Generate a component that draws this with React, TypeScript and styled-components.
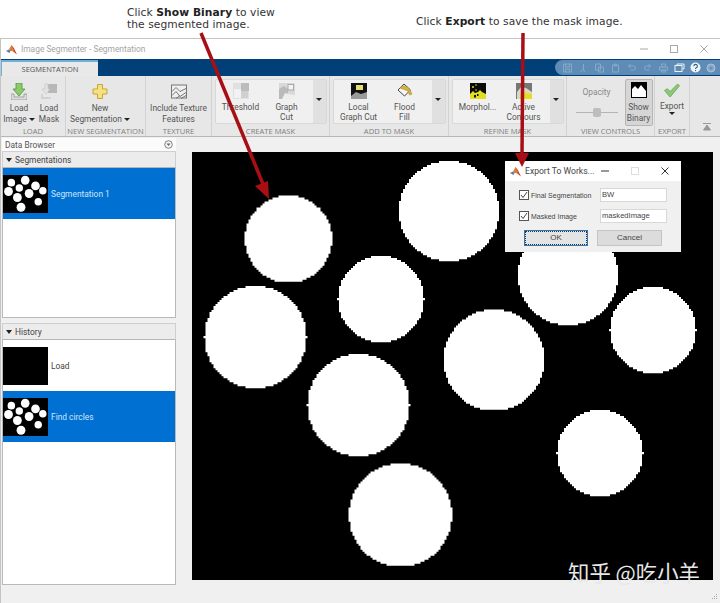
import React from "react";
import styled, { createGlobalStyle } from "styled-components";

const GlobalStyle = createGlobalStyle`
  html, body { margin: 0; padding: 0; background: #fff; }
`;

const uiFont = `Roboto, "Liberation Sans", sans-serif`;

const Page = styled.div`
  position: relative;
  width: 720px;
  height: 603px;
  overflow: hidden;
  background: #fff;
  font-family: "Open Sans", "Liberation Sans", sans-serif;
`;

const Captions = styled.div`
  height: 38px;
  display: flex;
  align-items: flex-start;
`;

const Caption = styled.div<{ $left: number; $top: number; $width: number }>`
  margin-left: ${(p) => p.$left}px;
  padding-top: ${(p) => p.$top}px;
  width: ${(p) => p.$width}px;
  font-family: "DejaVu Sans", sans-serif;
  font-size: 10.7px;
  line-height: 12px;
  letter-spacing: 0.07px;
  color: #333;
  white-space: pre;
  b { color: #222; }
`;

const Window = styled.div`
  height: 565px;
  box-sizing: border-box;
  border-top: 1px solid #c4c4c4;
  border-left: 1px solid #c4c4c4;
  display: flex;
  flex-direction: column;
`;

const TitleBar = styled.div`
  height: 20px;
  display: flex;
  align-items: center;
  padding-left: 5px;
  background: #fff;
`;

const TitleText = styled.span`
  margin-left: 4px;
  font-family: ${uiFont};
  font-size: 8.4px;
  color: #a4a4a4;
  flex: 1;
`;

const WinButtons = styled.div`
  display: flex;
  align-items: center;
  gap: 20px;
  padding-right: 11px;
`;

const TabBar = styled.div`
  height: 17px;
  background: #003f78;
  display: flex;
  justify-content: space-between;
  align-items: flex-end;
`;

const Tab = styled.div`
  width: 97px;
  height: 16px;
  box-sizing: border-box;
  background: #e9e9e9;
  border-top: 2px solid #6fb0d8;
  border-left: 1px solid #6fb0d8;
  text-align: center;
  font-size: 7.5px;
  line-height: 14px;
  color: #555;
`;

const QuickBar = styled.div`
  height: 15px;
  width: 165px;
  margin-bottom: 1px;
  border-radius: 8px 0 0 8px;
  background: #5e8cb6;
  display: flex;
  align-items: center;
  justify-content: flex-end;
  gap: 5px;
  padding-right: 4px;
  box-sizing: border-box;
`;

const Ribbon = styled.div`
  height: 61px;
  box-sizing: border-box;
  background: #e7e7e7;
  border-bottom: 1px solid #b8b8b8;
  display: flex;
`;

const Group = styled.div<{ $width: number }>`
  width: ${(p) => p.$width}px;
  box-sizing: border-box;
  border-right: 1px solid #d2d2d2;
  display: flex;
  flex-direction: column;
`;

const GroupTools = styled.div<{ $padLeft?: number; $padRight?: number }>`
  flex: 1;
  display: flex;
  justify-content: center;
  padding: 3px ${(p) => p.$padRight ?? 0}px 0 ${(p) => p.$padLeft ?? 0}px;
  min-height: 0;
`;

const GroupLabel = styled.div`
  height: 10px;
  text-align: center;
  font-size: 7.6px;
  line-height: 10px;
  color: #808080;
  white-space: nowrap;
`;

const Tool = styled.div<{ $width: number; $muted?: boolean }>`
  width: ${(p) => p.$width}px;
  display: flex;
  flex-direction: column;
  align-items: center;
  padding-top: 4px;
  font-family: ${uiFont};
  font-size: 8.4px;
  line-height: 10.5px;
  color: ${(p) => (p.$muted ? "#8a8a8a" : "#555")};
  text-align: center;
  white-space: nowrap;
  svg { margin-bottom: 3px; }
`;

const GalleryTool = styled(Tool)`
  padding-top: 3px;
  line-height: 10px;
  svg { margin-bottom: 3px; }
`;

const ToggledTool = styled(Tool)`
  box-sizing: border-box;
  height: 47px;
  border: 1px solid #b5b5b5;
  border-radius: 2px;
  background: #d6d6d6;
  padding-top: 2px;
  svg { margin-bottom: 4px; }
`;

const OpacityTool = styled(Tool)`
  padding-top: 8px;
`;

const Gallery = styled.div<{ $width: number }>`
  width: ${(p) => p.$width}px;
  height: 45px;
  box-sizing: border-box;
  border: 1px solid #d8d8d8;
  border-radius: 2px;
  background: #f0f0f0;
  display: flex;
`;

const GalleryItems = styled.div`
  flex: 1;
  display: flex;
  padding-left: 2px;
`;

const GalleryMore = styled.div`
  width: 13px;
  background: #e0e0e0;
  display: flex;
  align-items: center;
  justify-content: center;
  padding-bottom: 4px;
`;

const Caret = styled.span`
  display: inline-block;
  width: 0;
  height: 0;
  border-left: 3px solid transparent;
  border-right: 3px solid transparent;
  border-top: 3px solid #222;
  vertical-align: 1px;
`;

const SliderTrack = styled.div`
  position: relative;
  width: 42px;
  height: 1px;
  margin-top: 14px;
  background: #b4b4b4;
`;

const SliderThumb = styled.span`
  position: absolute;
  left: 17px;
  top: -4px;
  width: 8px;
  height: 9px;
  border-radius: 2px;
  background: #bdbdbd;
`;

const CollapseArea = styled.div`
  flex: 1;
  display: flex;
  align-items: flex-end;
  justify-content: flex-end;
  padding: 0 9px 5px 0;
`;

const Content = styled.div`
  flex: 1;
  min-height: 0;
  background: #f0f0f0;
  display: flex;
  position: relative;
`;

const Sidebar = styled.div`
  width: 174px;
  margin-left: 1px;
  display: flex;
  flex-direction: column;
`;

const BrowserHead = styled.div`
  height: 13px;
  margin-top: 1px;
  padding: 0 3px;
  background: #fbfbfb;
  display: flex;
  align-items: center;
  justify-content: space-between;
  font-family: ${uiFont};
  font-size: 8.4px;
  color: #555;
`;

const SectionHead = styled.div<{ $gap: number }>`
  height: 17px;
  box-sizing: border-box;
  margin-top: ${(p) => p.$gap}px;
  padding-left: 3px;
  display: flex;
  align-items: center;
  gap: 3px;
  background: #ececec;
  border: 1px solid #cfcfcf;
  border-bottom: 1px solid #b5b5b5;
  font-family: ${uiFont};
  font-size: 8.4px;
  color: #444;
`;

const TriangleDown = styled.span`
  width: 0;
  height: 0;
  border-left: 3.5px solid transparent;
  border-right: 3.5px solid transparent;
  border-top: 4px solid #222;
`;

const List = styled.div<{ $height: number }>`
  height: ${(p) => p.$height}px;
  box-sizing: border-box;
  background: #fff;
  border: 1px solid #b9b9b9;
  border-top: none;
`;

const Row = styled.div<{ $selected?: boolean }>`
  height: 51px;
  display: flex;
  align-items: center;
  gap: 3px;
  background: ${(p) => (p.$selected ? "#0070d2" : "#fff")};
  color: ${(p) => (p.$selected ? "#cde6fa" : "#444")};
  font-family: ${uiFont};
  font-size: 8.4px;
`;

const Thumb = styled.svg`
  width: 45px;
  height: 38px;
  display: block;
  flex: none;
`;

const CanvasArea = styled.div`
  flex: 1;
  padding: 15px 0 0 16px;
`;

const Picture = styled.svg`
  display: block;
  width: 521px;
  height: 428px;
`;

const Dialog = styled.div`
  position: absolute;
  left: 505px;
  top: 161px;
  width: 176px;
  height: 91px;
  background: #f0f0f0;
  font-family: "Liberation Sans", sans-serif;
  font-size: 7.6px;
  color: #444;
`;

const DialogTitle = styled.div`
  height: 20px;
  background: #fff;
  display: flex;
  align-items: center;
  padding-left: 5px;
  font-family: ${uiFont};
  font-size: 8.6px;
  gap: 4px;
  white-space: nowrap;
  span { flex: 1; }
`;

const DialogBody = styled.div`
  padding: 7px 14px 0 14px;
  display: flex;
  flex-direction: column;
  gap: 7px;
`;

const DialogRow = styled.div`
  display: flex;
  align-items: center;
  justify-content: space-between;
`;

const CheckLabel = styled.label`
  display: flex;
  align-items: center;
  gap: 2px;
  font-size: 7px;
`;

const Check = styled.span`
  width: 8px;
  height: 8px;
  border: 1px solid #555;
  background: #fff;
  display: flex;
`;

const Field = styled.div`
  width: 67px;
  height: 14px;
  box-sizing: border-box;
  padding-left: 1px;
  background: #fff;
  border: 1px solid #d8d8d8;
  line-height: 12px;
`;

const DialogButtons = styled.div`
  display: flex;
  justify-content: space-between;
  padding: 0 5px;
`;

const DialogButton = styled.div<{ $primary?: boolean }>`
  width: ${(p) => (p.$primary ? 64 : 65)}px;
  height: 16px;
  box-sizing: border-box;
  text-align: center;
  font-size: 8px;
  line-height: 14px;
  background: ${(p) => (p.$primary ? "#e4e4e4" : "#dcdcdc")};
  border: 1px ${(p) => (p.$primary ? "solid #2f78b8" : "solid #c4c4c4")};
  outline: ${(p) => (p.$primary ? "1px dotted #333" : "none")};
  outline-offset: -2px;
`;

const Watermark = styled.div`
  position: absolute;
  left: 568px;
  top: 559px;
  font-family: "Noto Sans CJK SC", sans-serif;
  font-size: 21.4px;
  line-height: 26px;
  color: #e8e8e8;
  white-space: nowrap;
`;

const Arrows = styled.svg`
  position: absolute;
  left: 0;
  top: 0;
  width: 720px;
  height: 603px;
  pointer-events: none;
`;

const Grip = styled.svg`
  position: absolute;
  right: 2px;
  bottom: 2px;
`;

const circles = [
  [288.5, 239, 43.5],
  [449, 211, 50],
  [381, 299, 43],
  [255.5, 337, 51],
  [494, 360, 50.5],
  [568, 275, 50],
  [653, 330, 43],
  [358.5, 405, 51],
  [600, 453, 43],
  [400.5, 515, 51.5],
];

// the source image is low res, so the edges show as small steps
const STEP = 2;

function stepped(cx: number, cy: number, r: number) {
  let d = "";
  for (let y = cy - r; y < cy + r; y += STEP) {
    const mid = y + STEP / 2 - cy;
    if (Math.abs(mid) >= r) continue;
    const half = Math.round(Math.sqrt(r * r - mid * mid) / STEP) * STEP;
    d += `M${(cx - half).toFixed(1)} ${y.toFixed(1)}h${(half * 2).toFixed(1)}v${STEP + 0.2}h${(-half * 2).toFixed(1)}z`;
  }
  return d;
}

const SteppedCircles = () => (
  <>
    {circles.map(([cx, cy, r]) => (
      <path key={cx} d={stepped(cx, cy, r)} fill="#fff" />
    ))}
  </>
);

const MaskThumb = ({ empty }: { empty?: boolean }) => (
  <Thumb viewBox="192 152 521 428" preserveAspectRatio="none">
    <rect x="192" y="152" width="521" height="428" fill="#000" />
    {!empty && circles.map(([cx, cy, r]) => <circle key={cx} cx={cx} cy={cy} r={r} fill="#fff" />)}
  </Thumb>
);

const MatlabLogo = () => (
  <svg width="11" height="11" viewBox="0 0 11 11">
    <path d="M0 7l3-1.5L4.5 7 3.5 9z" fill="#4a7fb5" />
    <path d="M3 5.5L5.5 1 8 4.5 6 7H4.5z" fill="#e07a35" />
    <path d="M5.5 1l1.5 3 1.5 4.5L11 10.5 8 4.5z" fill="#b8341c" />
    <path d="M6 7l2-2.5.5 4z" fill="#d9622b" />
  </svg>
);

const LoadImageIcon = () => (
  <svg width="16" height="17" viewBox="0 0 16 17">
    <path d="M0 11h3v3h10v-3h3v6H0z" fill="#dcdcdc" stroke="#8a8a8a" strokeWidth="0.7" />
    <path d="M5 0h6v6h3l-6 7-6-7h3z" fill="#8cc96a" stroke="#4f9440" strokeWidth="0.8" />
  </svg>
);

const LoadMaskIcon = () => (
  <svg width="16" height="17" viewBox="0 0 16 17">
    <rect x="7" y="1" width="9" height="9" fill="#b8b8b8" />
    <path d="M4 1h3v5h2l-4 5-4-5h3z" fill="#e4e4e4" stroke="#c4c4c4" strokeWidth="0.7" />
    <path d="M0 11h2v3h8v2H0z" fill="#d2d2d2" />
  </svg>
);

const NewSegIcon = () => (
  <svg width="16" height="17" viewBox="0 0 16 16">
    <path d="M5.5 1h5v4.5H15v5h-4.5V15h-5v-4.5H1v-5h4.5z" fill="#f6e27c" stroke="#c8a43a" strokeWidth="1" />
  </svg>
);

const TextureIcon = () => (
  <svg width="16" height="17" viewBox="0 0 16 16">
    <rect x=".5" y="1.5" width="15" height="13" fill="#efefef" stroke="#777" />
    <path d="M1 8l4-4 4 4 6-3M1 12l4-4 4 5 6-4M5 15l4-3M10 15l5-3" stroke="#777" fill="none" />
  </svg>
);

const ThresholdIcon = () => (
  <svg width="16" height="16" viewBox="0 0 16 16">
    <rect width="16" height="16" fill="#e0e0e0" />
    <rect x="8" width="8" height="8" fill="#bcbcbc" />
    <rect x="1" y="6" width="7" height="9" fill="#f2f2f2" />
    <path d="M8 8h7v7H8z" fill="#d0d0d0" />
  </svg>
);

const GraphCutIcon = () => (
  <svg width="16" height="16" viewBox="0 0 16 16">
    <rect width="16" height="16" fill="#d8d8d8" />
    <path d="M0 6l5-3 4 3v10H0z" fill="#bababa" />
    <rect x="9" y="1.5" width="5.5" height="5.5" fill="#f4f4f4" stroke="#aaa" />
    <path d="M3 16l3-6 4 1 6 1v4z" fill="#ededed" />
  </svg>
);

const LocalCutIcon = () => (
  <svg width="16" height="16" viewBox="0 0 16 16">
    <rect width="16" height="16" fill="#111" />
    <rect x="5" y="2" width="7" height="5" fill="#e6e070" />
    <path d="M0 16v-3l5-4 5 2 6-2v7z" fill="#9a9a9a" />
  </svg>
);

const FloodIcon = () => (
  <svg width="16" height="16" viewBox="0 0 16 16">
    <path d="M7 1l6.5 6-6 6L1 7z" fill="#f6f6f6" stroke="#444" strokeWidth="1" />
    <path d="M3 5c2-3 7-3 10 2l2 4-2.5 1L11 8z" fill="#d8b23c" stroke="#a08020" strokeWidth="0.5" />
  </svg>
);

const MorphIcon = () => (
  <svg width="16" height="16" viewBox="0 0 16 16">
    <rect width="16" height="16" fill="#0c0c0c" />
    <path d="M0 16v-5l3-3 2 2 3-1 2-2 2 2 4 2v5z" fill="#e4dc1e" />
    <circle cx="3" cy="4" r="1" fill="#e4dc1e" />
    <circle cx="6" cy="2" r="0.8" fill="#e4dc1e" />
    <circle cx="6" cy="7" r="0.8" fill="#e4dc1e" />
    <rect x="4" y="12" width="2" height="2.5" fill="#111" />
    <rect x="7" y="11" width="1.5" height="2" fill="#111" />
  </svg>
);

const ContourIcon = () => (
  <svg width="16" height="16" viewBox="0 0 16 16">
    <rect width="16" height="16" fill="#767676" />
    <path d="M1 16V9l4-5 5 1 6 4v7z" fill="#d8d8c8" />
    <path d="M4 16v-4l3-3 3 1 6 1v5z" fill="#e8dc20" />
  </svg>
);

const BinaryIcon = () => (
  <svg width="16" height="16" viewBox="0 0 16 16">
    <rect width="16" height="16" fill="#000" />
    <path d="M1 15V7l3-3 3 3 3-4 5 6v6z" fill="#fff" />
  </svg>
);

const CheckIcon = () => (
  <svg width="18" height="15" viewBox="0 0 18 16">
    <path d="M1 8l3-2 3 3 8-8 2 2L7 15z" fill="#8cc87a" stroke="#5ea24e" strokeWidth="0.8" />
  </svg>
);

const TickMark = () => (
  <svg width="8" height="8" viewBox="0 0 8 8">
    <path d="M1 4l2 2.5L7 1" fill="none" stroke="#444" strokeWidth="1" />
  </svg>
);

const MenuCircle = () => (
  <svg width="9" height="9" viewBox="0 0 9 9">
    <circle cx="4.5" cy="4.5" r="3.8" fill="#f4f4f4" stroke="#666" strokeWidth="0.8" />
    <path d="M2.5 3.5h4L4.5 6z" fill="#666" />
  </svg>
);

const quickPaths = [
  "M1 1h8v8H1zM3 1v3h4V1M3 9V6h4v3",
  "M5 1v5M5 6L2 9M5 6l1 3",
  "M1 1h5v6H1zM4 4h5v5H4z",
  "M2 2h6v7H2zM4 1h2v2H4z",
  "M2 3h5a2 2 0 0 1 0 4H4M2 3l2-2M2 3l2 2",
  "M8 3H4a2 2 0 0 0 0 4h3M8 3L6 1M8 3L6 5",
  "M3 1h4v3H3zM1 4h8v3H1zM3 7h4v2H3z",
];

const QuickBarIcons = () => (
  <>
    {quickPaths.map((d) => (
      <svg key={d} width="11" height="10" viewBox="0 0 10 10">
        <path d={d} fill="none" stroke="#86a9c9" strokeWidth="1" />
      </svg>
    ))}
    <svg width="11" height="10" viewBox="0 0 10 10">
      <rect x=".5" y="2.5" width="7" height="6" fill="#5e8cb6" stroke="#eef3f7" />
      <path d="M2.5 2.5V1h7v5H8" fill="none" stroke="#eef3f7" />
    </svg>
    <svg width="11" height="11" viewBox="0 0 11 11">
      <circle cx="5.5" cy="5.5" r="5" fill="#f2f5f8" />
      <path d="M3.8 4.2a1.8 1.8 0 1 1 2.5 1.6c-.6.3-.8.6-.8 1.200" fill="none" stroke="#2d5f8f" strokeWidth="1.1" />
      <rect x="5" y="8" width="1.1" height="1.1" fill="#2d5f8f" />
    </svg>
    <svg width="10" height="10" viewBox="0 0 10 10">
      <circle cx="5" cy="5" r="4" fill="#86a9c9" stroke="#a9c2d8" />
      <path d="M3 4h4L5 7z" fill="#5e8cb6" />
    </svg>
  </>
);

const WinGlyph = ({ kind, color }: { kind: "min" | "max" | "close"; color: string }) => (
  <svg width="10" height="10" viewBox="0 0 10 10" fill="none" stroke={color} strokeWidth="1">
    {kind === "min" && <path d="M1 5h8" />}
    {kind === "max" && <rect x="1.5" y="1.5" width="7" height="7" />}
    {kind === "close" && <path d="M1.5 1.5l7 7M8.5 1.5l-7 7" />}
  </svg>
);

const GalleryGroup = ({
  width,
  label,
  children,
}: {
  width: number;
  label: string;
  children: React.ReactNode;
}) => (
  <Group $width={width}>
    <GroupTools>
      <Gallery $width={width - 6}>
        <GalleryItems>{children}</GalleryItems>
        <GalleryMore>
          <Caret />
        </GalleryMore>
      </Gallery>
    </GroupTools>
    <GroupLabel>{label}</GroupLabel>
  </Group>
);

export default function App() {
  return (
    <Page>
      <GlobalStyle />
      <Captions>
        <Caption $left={127} $top={7} $width={147}>
          Click <b>Show Binary</b> to view{"\n"}the segmented image.
        </Caption>
        <Caption $left={142} $top={16} $width={210}>
          Click <b>Export</b> to save the mask image.
        </Caption>
      </Captions>

      <Window>
        <TitleBar>
          <MatlabLogo />
          <TitleText>Image Segmenter - Segmentation</TitleText>
          <WinButtons>
            <WinGlyph kind="min" color="#a8a8a8" />
            <WinGlyph kind="max" color="#a8a8a8" />
            <WinGlyph kind="close" color="#a8a8a8" />
          </WinButtons>
        </TitleBar>

        <TabBar>
          <Tab>SEGMENTATION</Tab>
          <QuickBar>
            <QuickBarIcons />
          </QuickBar>
        </TabBar>

        <Ribbon>
          <Group $width={65}>
            <GroupTools $padLeft={2}>
              <Tool $width={30}>
                <LoadImageIcon />
                Load
                <span>
                  Image <Caret />
                </span>
              </Tool>
              <Tool $width={30}>
                <LoadMaskIcon />
                Load
                <br />
                Mask
              </Tool>
            </GroupTools>
            <GroupLabel>LOAD</GroupLabel>
          </Group>
          <Group $width={80}>
            <GroupTools $padRight={11}>
              <Tool $width={60}>
                <NewSegIcon />
                New
                <span>
                  Segmentation <Caret />
                </span>
              </Tool>
            </GroupTools>
            <GroupLabel>NEW SEGMENTATION</GroupLabel>
          </Group>
          <Group $width={66}>
            <GroupTools>
              <Tool $width={60}>
                <TextureIcon />
                Include Texture
                <br />
                Features
              </Tool>
            </GroupTools>
            <GroupLabel>TEXTURE</GroupLabel>
          </Group>
          <GalleryGroup width={118} label="CREATE MASK">
            <GalleryTool $width={46}>
              <ThresholdIcon />
              Threshold
            </GalleryTool>
            <GalleryTool $width={46}>
              <GraphCutIcon />
              Graph
              <br />
              Cut
            </GalleryTool>
          </GalleryGroup>
          <GalleryGroup width={119} label="ADD TO MASK">
            <GalleryTool $width={46}>
              <LocalCutIcon />
              Local
              <br />
              Graph Cut
            </GalleryTool>
            <GalleryTool $width={46}>
              <FloodIcon />
              Flood
              <br />
              Fill
            </GalleryTool>
          </GalleryGroup>
          <GalleryGroup width={118} label="REFINE MASK">
            <GalleryTool $width={46}>
              <MorphIcon />
              Morphol...
            </GalleryTool>
            <GalleryTool $width={46}>
              <ContourIcon />
              Active
              <br />
              Contours
            </GalleryTool>
          </GalleryGroup>
          <Group $width={88}>
            <GroupTools>
              <OpacityTool $width={56} $muted>
                Opacity
                <SliderTrack>
                  <SliderThumb />
                </SliderTrack>
              </OpacityTool>
              <ToggledTool $width={28}>
                <BinaryIcon />
                Show
                <br />
                Binary
              </ToggledTool>
            </GroupTools>
            <GroupLabel>VIEW CONTROLS</GroupLabel>
          </Group>
          <Group $width={35}>
            <GroupTools>
              <Tool $width={34}>
                <CheckIcon />
                Export
                <Caret />
              </Tool>
            </GroupTools>
            <GroupLabel>EXPORT</GroupLabel>
          </Group>
          <CollapseArea>
            <svg width="8" height="8" viewBox="0 0 8 8">
              <path d="M0 .5h8M4 2L.5 7h7z" stroke="#999" fill="#999" />
            </svg>
          </CollapseArea>
        </Ribbon>

        <Content>
          <Sidebar>
            <BrowserHead>
              Data Browser
              <MenuCircle />
            </BrowserHead>
            <SectionHead $gap={0}>
              <TriangleDown />
              Segmentations
            </SectionHead>
            <List $height={150}>
              <Row $selected>
                <MaskThumb />
                Segmentation 1
              </Row>
            </List>
            <SectionHead $gap={5}>
              <TriangleDown />
              History
            </SectionHead>
            <List $height={245}>
              <Row>
                <MaskThumb empty />
                Load
              </Row>
              <Row $selected>
                <MaskThumb />
                Find circles
              </Row>
            </List>
          </Sidebar>
          <CanvasArea>
            <Picture viewBox="192 152 521 428">
              <rect x="192" y="152" width="521" height="428" fill="#000" />
              <SteppedCircles />
            </Picture>
          </CanvasArea>
          <Grip width="8" height="8" viewBox="0 0 8 8">
            <path d="M6 1h1v1H6zM4 3h1v1H4zM6 3h1v1H6zM2 5h1v1H2zM4 5h1v1H4zM6 5h1v1H6z" fill="#aaa" />
          </Grip>
        </Content>
      </Window>

      <Dialog>
        <DialogTitle>
          <MatlabLogo />
          <span>Export To Works...</span>
          <WinButtons>
            <WinGlyph kind="min" color="#333" />
            <WinGlyph kind="max" color="#ddd" />
            <WinGlyph kind="close" color="#333" />
          </WinButtons>
        </DialogTitle>
        <DialogBody>
          <DialogRow>
            <CheckLabel>
              <Check>
                <TickMark />
              </Check>
              Final Segmentation
            </CheckLabel>
            <Field>BW</Field>
          </DialogRow>
          <DialogRow>
            <CheckLabel>
              <Check>
                <TickMark />
              </Check>
              Masked Image
            </CheckLabel>
            <Field>maskedImage</Field>
          </DialogRow>
          <DialogButtons>
            <DialogButton $primary>OK</DialogButton>
            <DialogButton>Cancel</DialogButton>
          </DialogButtons>
        </DialogBody>
      </Dialog>

      <Watermark>知乎 @吃小羊</Watermark>

      <Arrows viewBox="0 0 720 603">
        <path d="M201 33L263 184" stroke="#a80f14" strokeWidth="3.5" fill="none" />
        <path d="M269 199L255 186 268 181z" fill="#a80f14" />
        <path d="M523 33L522 155" stroke="#a80f14" strokeWidth="3.5" fill="none" />
        <path d="M522 167L515 153 529 153z" fill="#a80f14" />
      </Arrows>
    </Page>
  );
}
